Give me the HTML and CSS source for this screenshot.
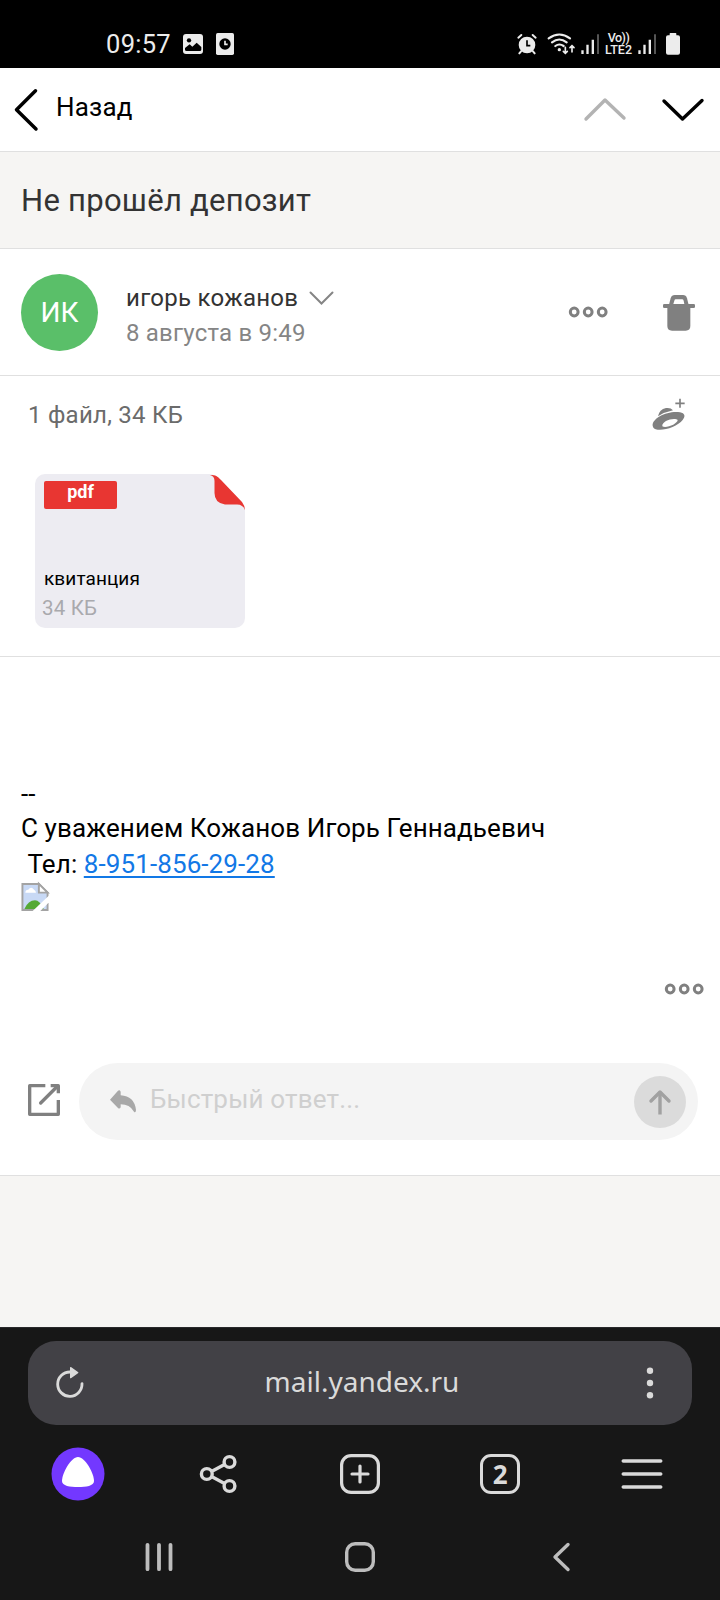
FILE: index.html
```html
<!DOCTYPE html>
<html lang="ru">
<head>
<meta charset="utf-8">
<title>Не прошёл депозит</title>
<link rel="stylesheet" href="styles.css">
</head>
<body>
<div class="status">
  <span class="time">09:57</span>
  <svg class="st-photo" width="20" height="20" viewBox="0 0 60 60"><rect width="60" height="60" rx="9" fill="#ececec"/><circle cx="18" cy="19" r="6.5"/><path d="M6 47V42L20 31L28 38L41 26L55 39V47Q55 51 50 51H11Q6 51 6 47Z"/></svg>
  <svg class="st-app" width="18" height="22" viewBox="0 0 54 66"><rect width="54" height="66" rx="5" fill="#ececec"/><circle cx="27" cy="33" r="17"/><path d="M27 23V34H35" fill="none" stroke="#ececec" stroke-width="5"/></svg>
  <div class="st-right">
    <svg class="i-alarm" width="20" height="22" viewBox="0 0 60 66" fill="none" stroke="#ececec" stroke-width="6" stroke-linecap="round"><circle cx="30" cy="36" r="25" fill="#ececec" stroke="none"/><path d="M4 14L13 6M47 6L56 14M12 55L7 61M48 55L53 61"/><path d="M30 22V38H40" stroke="#000" stroke-width="5" stroke-linecap="butt"/></svg>
    <svg class="i-wifi" width="29" height="22" viewBox="0 0 87 66" fill="none" stroke="#ececec" stroke-width="6.5" stroke-linecap="round"><path d="M5 16Q37-7 69 16M15 28Q37 11 59 28M25 39Q37 30 50 39"/><circle cx="37" cy="50" r="5" fill="#ececec" stroke="none"/><path d="M55 43V61M49 55L55 61L61 55M75 57V38M69 44L75 38L81 44" stroke-width="5"/></svg>
    <svg class="i-signal" width="19" height="21" viewBox="0 0 57 63" fill="#ececec"><path d="M1 49h7v11H1zM16 32h7v28h-7zM32 17h7v43h-7z"/><path d="M48 1h6v59h-6z" fill="#555"/></svg>
    <div class="lte"><span class="vo">Vo))</span><span class="lt">LTE2</span></div>
    <svg class="i-signal2" width="19" height="21" viewBox="0 0 57 63" fill="#ececec"><path d="M1 49h7v11H1zM16 32h7v28h-7zM32 17h7v43h-7z"/><path d="M48 1h6v59h-6z" fill="#555"/></svg>
    <svg class="i-batt" width="14" height="22" viewBox="0 0 42 66" fill="#ececec"><path d="M13 0H29Q31 0 31 2V7H36Q42 7 42 13V59Q42 65 36 65H6Q0 65 0 59V13Q0 7 6 7H11V2Q11 0 13 0Z"/></svg>
  </div>
</div>

<header class="topbar">
  <svg class="back-ic" width="26" height="44" viewBox="0 0 26 44" fill="none" stroke="#000" stroke-width="3.5" stroke-linecap="round" stroke-linejoin="round"><path d="M22.5 2.8L3.5 21.8L23 41"/></svg>
  <span class="back">Назад</span>
  <svg class="prev" width="42" height="24" viewBox="0 0 42 24" fill="none" stroke="#b3b3b3" stroke-width="3.4" stroke-linecap="round" stroke-linejoin="round"><path d="M2 21L21 2L40 20"/></svg>
  <svg class="next" width="42" height="24" viewBox="0 0 42 24" fill="none" stroke="#000" stroke-width="3.4" stroke-linecap="round" stroke-linejoin="round"><path d="M2 3L20.5 21L40 2.5"/></svg>
</header>

<h1 class="subject"><span>Не прошёл депозит</span></h1>

<section class="sender">
  <div class="avatar"><span>ИК</span></div>
  <div class="who">
    <div class="name"><span>игорь кожанов</span><svg width="25" height="15" viewBox="0 0 25 15" fill="none" stroke="#858585" stroke-width="2" stroke-linecap="round"><path d="M1.5 1.5L12.5 12.5L23.5 1.5"/></svg></div>
    <div class="date"><span>8 августа в 9:49</span></div>
  </div>
  <svg class="more" width="40" height="12" viewBox="0 0 40 12" fill="none" stroke="#808080" stroke-width="3"><circle cx="6.2" cy="6" r="3.9"/><circle cx="20.2" cy="6" r="3.9"/><circle cx="34.2" cy="6" r="3.9"/></svg>
  <svg class="trash" width="32" height="36" viewBox="0 0 96 108" fill="#808080"><path d="M13 27H82V93Q82 107 68 107H27Q13 107 13 93Z"/><rect y="27" width="96" height="12" rx="4"/><path d="M18 29L23 10Q26 0 35 0H60Q69 0 72 10L77 29Z"/><path d="M31 27L34 17Q35 13 38 13H57Q61 13 62 17L64 27Z" fill="#fff"/></svg>
</section>

<section class="attach">
  <div class="attach-head"><span class="count">1 файл, 34 КБ</span>
    <svg width="34" height="34" viewBox="0 0 102 102" fill="#808080"><path d="M84 2V29M70 16H98" fill="none" stroke="#808080" stroke-width="5"/><path d="M18 55Q22 34 42 30Q56 28 63 37Q38 42 18 55Z"/><path fill-rule="evenodd" d="M2 83C0 60 48 37 84 43C99 46 101 55 92 66C78 84 40 98 17 95Q3 93 2 83ZM31 85C42 93 77 77 77 66C69 57 28 67 31 85Z"/></svg>
  </div>
  <div class="file">
    <svg class="fold" width="36" height="36" viewBox="0 0 36 36"><path d="M2 0H36V34L33 29L11 5Q7 1 2 0Z" fill="#fff"/><path d="M1 1C7 1 8 2 12 6L33 28Q36 32 36 36Q34 30.5 28 30.5H16Q5.500 29 5.500 19V7Q5.500 2 1 1Z" fill="#e83632"/></svg>
    <div class="badge"><span>pdf</span></div>
    <div class="fname"><span>квитанция</span></div>
    <div class="fsize"><span>34 КБ</span></div>
  </div>
</section>

<section class="message">
  <div class="line dashes"><span>--</span></div>
  <div class="line"><span class="l-sign">С уважением Кожанов Игорь Геннадьевич</span></div>
  <div class="line tel"><span>Тел:</span><a href="#">8-951-856-29-28</a></div>
  <svg class="broken" width="28" height="29" viewBox="0 0 28 30"><path d="M1 2H18L27 11V29H1Z" fill="#c8d9f5" stroke="#a3a3a3" stroke-width="2"/><path d="M4 11Q4 8 7 8Q10 4 13 8Q15 9 15 11Z" fill="#fff"/><path d="M3 28Q7 19 14 19Q19 19 23 28Z" fill="#55a935"/><path d="M18 2V11H27Z" fill="#fff" stroke="#a3a3a3" stroke-width="2"/><path d="M28.500 14L11 30.500H19L28.500 21Z" fill="#fff"/></svg>
  <div class="more-row"><svg width="40" height="12" viewBox="0 0 40 12" fill="none" stroke="#808080" stroke-width="3"><circle cx="6.2" cy="6" r="3.9"/><circle cx="20.2" cy="6" r="3.9"/><circle cx="34.2" cy="6" r="3.9"/></svg></div>
  <div class="reply">
    <svg class="expand" width="32" height="32" viewBox="0 0 96 96" fill="none" stroke="#808080" stroke-width="10" stroke-linejoin="round"><path d="M52 5H5V91H91V48"/><path d="M38 57L86 9" stroke-linecap="round"/><path d="M68 5H91V28" stroke-width="10"/></svg>
    <div class="pill">
      <svg width="26" height="23" viewBox="0 0 78 69" fill="#a8a8a8"><path d="M0 29L24 2Q29-2 32 5V16Q73 18 78 60Q77 70 72 65Q59 43 32 43V52Q29 58 24 54Z"/></svg>
      <span class="ph">Быстрый ответ...</span>
      <div class="send"><svg width="22" height="26" viewBox="0 0 22 26" fill="none" stroke="#a1a1a1" stroke-width="3.4" stroke-linecap="round" stroke-linejoin="round"><path d="M2 12L11 3L20 12"/><path d="M11 3V25.5" stroke-linecap="butt"/></svg></div>
    </div>
  </div>
</section>

<div class="empty"></div>

<footer class="browser">
  <div class="url">
    <svg class="reload" width="28" height="31" viewBox="0 0 84 93"><path d="M42 15A36.500 36.500 0 1 0 78 50" fill="none" stroke="#dadada" stroke-width="8.500" stroke-linecap="round"/><path d="M42 2Q42-1 46 1L66 15Q69 17 66 19L46 33Q42 35 42 32Z" fill="#dadada"/></svg>
    <span class="host">mail.yandex.ru</span>
    <svg class="kebab" width="8" height="32" viewBox="0 0 8 32" fill="#dadada"><circle cx="4" cy="3.7" r="3.2"/><circle cx="4" cy="16" r="3.2"/><circle cx="4" cy="28.3" r="3.2"/></svg>
  </div>
  <div class="tools">
    <div><svg width="54" height="54" viewBox="0 0 54 54"><circle cx="27" cy="27" r="26.5" fill="#7338ff"/><path d="M27 10C34 10 43 26 43 34C43 39 35 40 27 40C19 40 11 39 11 34C11 26 20 10 27 10Z" fill="#fff"/></svg></div>
    <div class="share"><svg width="38" height="40" viewBox="0 0 38 40" fill="none" stroke="#dadada" stroke-width="3.4"><circle cx="7.8" cy="20" r="5.4"/><circle cx="30.5" cy="8" r="5.4"/><circle cx="30.5" cy="32" r="5.4"/><path d="M12.5 17.5L26 10.3M12.5 22.5L26 29.7"/></svg></div>
    <div><svg width="40" height="40" viewBox="0 0 40 40" fill="none" stroke="#dadada" stroke-width="3.2" stroke-linecap="round"><rect x="1.6" y="1.6" width="36.8" height="36.8" rx="9.5"/><path d="M12 20H28M20 12V28"/></svg></div>
    <div class="tabs-cell"><span class="tabs">2</span></div>
    <div><svg width="42" height="32" viewBox="0 0 42 32" fill="none" stroke="#dadada" stroke-width="3.6" stroke-linecap="round"><path d="M2.3 3H39.7M2.3 16H39.7M2.3 29H39.7"/></svg></div>
  </div>
  <div class="nav">
    <div><svg width="28" height="30" viewBox="0 0 28 30" fill="none" stroke="#bdbdbd" stroke-width="3.8" stroke-linecap="round"><path d="M2.5 2.8V27.2M14 2.8V27.2M25.5 2.8V27.2"/></svg></div>
    <div><svg width="32" height="32" viewBox="0 0 32 32" fill="none" stroke="#bdbdbd" stroke-width="3.4"><rect x="2.7" y="2.7" width="26.6" height="26.6" rx="8.5"/></svg></div>
    <div><svg width="18" height="30" viewBox="0 0 18 30" fill="none" stroke="#bdbdbd" stroke-width="3.4" stroke-linecap="round" stroke-linejoin="round"><path d="M16 2.5L3 15L16 27.5"/></svg></div>
  </div>
</footer>
</body>
</html>
```
FILE: styles.css
```css
* { box-sizing: border-box; }
body { margin: 0; width: 720px; height: 1600px; background: #fff; font-family: Roboto, "Noto Sans", sans-serif; color: #000; overflow: hidden; }
svg { display: block; flex: none; overflow: visible; }
span, a { white-space: nowrap; }

.status { height: 68px; background: #000; color: #ececec; display: flex; align-items: center; padding: 20px 40px 0 106px; }
.time { font-size: 25.5px; width: 77px; line-height: 26px; letter-spacing: 0.3px; }
.st-app { margin-left: 13px; }
.st-right { margin-left: auto; display: flex; align-items: center; }
.i-wifi { margin-left: 10px; }
.i-signal { margin-left: 5px; }
.i-signal2 { margin-left: 6px; }
.i-batt { margin-left: 9px; }
.lte { width: 27px; margin-left: 5px; height: 24px; display: flex; flex-direction: column; align-items: center; font-size: 12.5px; line-height: 12px; font-weight: 500; }
.vo { font-size: 12.5px; letter-spacing: -0.5px; }

.topbar { height: 84px; border-bottom: 1px solid #e0e0e0; display: flex; align-items: center; padding: 0 16px 0 13px; }
.back { font-size: 26px; letter-spacing: 0.2px; margin-left: 17px; padding-bottom: 5px; }
.prev { margin-left: auto; }
.next { margin-left: 36px; }

.subject { margin: 0; height: 97px; background: #f6f5f3; border-bottom: 1px solid #e0e0e0; padding-left: 21px; display: flex; align-items: center; font-size: 31px; letter-spacing: 0.27px; font-weight: 400; color: #333; }

.sender { height: 127px; border-bottom: 1px solid #e0e0e0; display: flex; align-items: center; padding: 0 25px 0 21px; }
.avatar { width: 77px; height: 77px; border-radius: 50%; background: #5abf69; color: #fff; font-size: 28px; display: flex; align-items: center; justify-content: center; padding-top: 1px; }
.who { margin-left: 28px; padding-top: 7px; font-size: 24px; line-height: 35px; letter-spacing: 0.28px; }
.name { display: flex; align-items: center; gap: 11px; color: #333; }
.date { color: #858585; letter-spacing: 0.2px; }
.more { margin-left: auto; margin-right: 55px; }
.trash { margin-top: 1px; }

.attach { height: 281px; border-bottom: 1px solid #e0e0e0; }
.attach-head { height: 98px; padding: 0 34px 20px 28px; display: flex; align-items: center; justify-content: space-between; font-size: 24px; letter-spacing: 0.25px; color: #6b6b6b; }
.file { position: relative; margin-left: 35px; width: 210px; height: 154px; border-radius: 10px; background: #edecf2; padding: 7px 9px 6px; display: flex; flex-direction: column; }
.fold { position: absolute; top: 0; right: 0; }
.badge { width: 73px; height: 28px; border-radius: 2px; background: #e83632; color: #fff; font-size: 18px; font-weight: 700; line-height: 22px; text-align: center; }
.fname { margin-top: auto; font-size: 19px; line-height: 28px; letter-spacing: 0.1px; }
.fsize { font-size: 20.5px; line-height: 28px; letter-spacing: 0.2px; color: #a9a9ad; margin: 1px 0 0 -2px; }

.message { height: 519px; border-bottom: 1px solid #e0e0e0; padding: 117px 22px 0 21px; font-size: 26px; letter-spacing: 0.1px; display: flex; flex-direction: column; }
.line { height: 36px; line-height: 36px; }
.dashes { padding-top: 2px; }
.tel { padding-left: 6.5px; display: flex; gap: 6.5px; }
.tel a { color: #1278e6; text-underline-offset: 3px; text-decoration-thickness: 2px; }
.more-row { height: 12px; margin: 72px -6px 0 0; display: flex; justify-content: flex-end; }
.reply { margin-top: 68px; display: flex; align-items: center; padding-left: 7px; }
.expand { margin-bottom: 3px; }
.pill { margin-left: 19px; flex: 1; height: 77px; border-radius: 39px; background: #f4f4f4; display: flex; align-items: center; padding: 0 12px 0 31px; }
.ph { margin-left: 14px; font-size: 26px; letter-spacing: 0.17px; color: #cfcfcf; padding-bottom: 5px; }
.send { margin-left: auto; width: 52px; height: 52px; border-radius: 50%; background: #dbdbdb; display: flex; align-items: center; justify-content: center; }

.empty { height: 151px; background: #f6f5f3; }
.browser { height: 273px; background: #171717; border-top: 1px solid #29292b; padding-top: 13px; color: #dadada; }
.url { height: 84px; margin: 0 28px; border-radius: 28px; background: #424146; display: flex; align-items: center; justify-content: space-between; padding: 0 38px 0 28px; font-family: "Noto Sans", sans-serif; }
.reload { margin-bottom: 2px; }
.host { font-size: 28px; padding: 0 6px 5px 0; }
.tools { height: 98px; display: flex; align-items: center; padding: 0 7.5px; }
.tools div, .nav div { flex: 1; display: flex; justify-content: center; }
.tools .share, .tools .tabs-cell { padding-right: 2px; }
.tabs { width: 40px; height: 40px; border: 3px solid #dadada; border-radius: 11px; font: 700 26px/34px "Noto Sans", sans-serif; text-align: center; }
.nav { height: 68px; display: flex; align-items: center; padding: 0 58.5px; }
```
